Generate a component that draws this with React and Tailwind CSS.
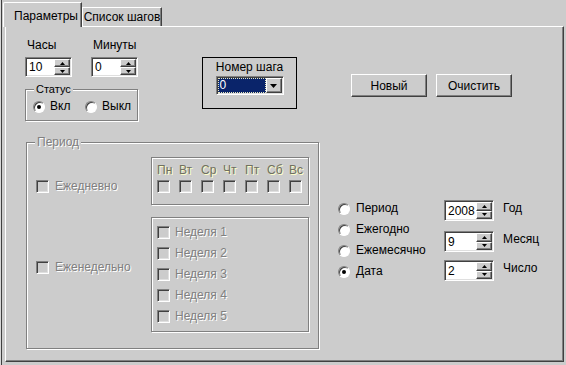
const sunken =
  'border border-t-[#808080] border-l-[#808080] border-r-white border-b-white shadow-[inset_1px_1px_0_#404040,inset_-1px_-1px_0_#dfdfdf]';
const raised =
  'border border-t-white border-l-white border-r-[#404040] border-b-[#404040] shadow-[inset_-1px_-1px_0_#808080]';
const etched = 'border border-[#808080] shadow-[inset_1px_1px_0_#ffffff,1px_1px_0_#ffffff]';
const disabledText = 'text-[#808080] [text-shadow:1px_1px_0_#ffffff]';

function Arrow({ up }) {
  return (
    <svg width="5" height="3" viewBox="0 0 5 3">
      <polygon points={up ? '2.5,0 5,3 0,3' : '0,0 5,0 2.5,3'} fill="#000" />
    </svg>
  );
}

function Spinner({ value, className }) {
  return (
    <div className={`flex p-[1px] bg-white ${sunken} ${className}`}>
      <div className="flex-1 flex items-center pl-[2px] text-[12px]">{value}</div>
      <div className="flex flex-col w-[16px]">
        <div className={`flex-1 flex items-center justify-center bg-[#cccccc] ${raised}`}>
          <Arrow up />
        </div>
        <div className={`flex-1 flex items-center justify-center bg-[#cccccc] ${raised}`}>
          <Arrow />
        </div>
      </div>
    </div>
  );
}

function Radio({ checked }) {
  return (
    <span className="shrink-0 w-[12px] h-[12px] rounded-full bg-white border border-t-[#808080] border-l-[#808080] border-r-white border-b-white shadow-[inset_1px_1px_0_#404040] flex items-center justify-center">
      {checked && <span className="w-[4px] h-[4px] rounded-full bg-black" />}
    </span>
  );
}

function Check() {
  return <span className={`shrink-0 block w-[13px] h-[13px] bg-[#cccccc] ${sunken}`} />;
}

function Group({ title, className, disabled, children }) {
  return (
    <div className={`relative ${etched} ${className}`}>
      <span
        className={`absolute -top-[7px] left-[8px] px-[2px] bg-[#cccccc] leading-[13px] ${
          disabled ? disabledText : ''
        }`}
      >
        {title}
      </span>
      {children}
    </div>
  );
}

function Field({ label, value }) {
  return (
    <div className="flex flex-col w-[47px]">
      <span className="pl-[2px] h-[13px] leading-[13px] text-[12px]">{label}</span>
      <Spinner value={value} className="mt-[5px] h-[20px] w-[47px]" />
    </div>
  );
}

const days = ['Пн', 'Вт', 'Ср', 'Чт', 'Пт', 'Сб', 'Вс'];
const weeks = ['Неделя 1', 'Неделя 2', 'Неделя 3', 'Неделя 4', 'Неделя 5'];

export default function App() {
  return (
    <div className="w-[566px] h-[365px] bg-[#cccccc] flex flex-col overflow-hidden text-black text-[11px] font-['Liberation_Sans',Arial,sans-serif] shadow-[inset_1px_0_0_#d8d8d8,inset_2px_0_0_#404040]">
      <div className="h-[26px] flex items-end pl-[3px] shrink-0">
        <div className="relative z-10 -mb-px h-[25px] w-[79px] bg-[#cccccc] border-t border-l border-white border-r border-r-[#404040] shadow-[inset_-1px_0_0_#808080] rounded-tl-[2px] pl-[10px] pt-[7px] leading-[13px] text-[12px]">
          Параметры
        </div>
        <div className="h-[19px] w-[80px] border-t border-l border-white border-r border-r-[#404040] shadow-[inset_-1px_0_0_#808080] text-center pt-[3px] leading-[13px] text-[12px]">
          Список шагов
        </div>
      </div>

      <div className="ml-[5px] w-[559px] h-[336px] shrink-0 border-t border-l border-white border-r border-b border-r-[#404040] border-b-[#404040] shadow-[inset_-1px_-1px_0_#808080]">
        <div className="flex items-start mt-[12px] ml-[19px]">
          <div className="flex flex-col w-[113px]">
            <div className="flex gap-[19px]">
              <Field label="Часы" value="10" />
              <Field label="Минуты" value="0" />
            </div>
            <Group title="Статус" className="mt-[12px] h-[32px]">
              <div className="flex items-center pt-[10px] pl-[7px] text-[12px] leading-[13px]">
                <label className="flex items-center gap-[5px] w-[52px]">
                  <Radio checked />
                  Вкл
                </label>
                <label className="flex items-center gap-[5px]">
                  <Radio />
                  Выкл
                </label>
              </div>
            </Group>
          </div>

          <div className="ml-[64px] mt-[18px] w-[95px] h-[52px] border border-black flex flex-col items-center pt-[3px]">
            <span className="leading-[13px] text-[12px]">Номер шага</span>
            <div className={`mt-[2px] w-[68px] h-[19px] p-[1px] flex bg-white ${sunken}`}>
              <div className="flex-1 bg-[#0a246a] border border-dotted border-[#e8e8c0] text-white pl-[1px] leading-[13px] text-[12px]">
                0
              </div>
              <div className={`w-[16px] flex items-center justify-center bg-[#cccccc] ${raised}`}>
                <svg width="7" height="4" viewBox="0 0 7 4">
                  <polygon points="0,0 7,0 3.5,4" fill="#000" />
                </svg>
              </div>
            </div>
          </div>

          <div className="flex gap-[9px] ml-[54px] mt-[35px]">
            <button className={`w-[76px] h-[23px] bg-[#cccccc] text-[12px] ${raised}`}>Новый</button>
            <button className={`w-[76px] h-[23px] bg-[#cccccc] text-[12px] ${raised}`}>Очистить</button>
          </div>
        </div>

        <div className="flex items-start mt-[21px]">
          <Group title="Период" disabled className="ml-[20px] w-[293px] h-[207px] text-[12px]">
            <div className="flex items-start mt-[14px]">
              <div className="w-[124px] pl-[9px] pt-[23px] flex items-center gap-[6px]">
                <Check />
                <span className={`leading-[13px] ${disabledText}`}>Ежедневно</span>
              </div>
              <div className={`w-[158px] h-[48px] pl-[5px] pt-[6px] ${etched}`}>
                <div className="grid grid-cols-7 w-[154px]">
                  {days.map((d) => (
                    <span
                      key={d}
                      className="leading-[13px] text-[#707060] [text-shadow:1px_1px_0_#ffffc8]"
                    >
                      {d}
                    </span>
                  ))}
                  {days.map((d) => (
                    <span key={d + 'c'} className="mt-[3px]">
                      <Check />
                    </span>
                  ))}
                </div>
              </div>
            </div>
            <div className="flex items-start mt-[12px]">
              <div className="w-[124px] pl-[9px] pt-[44px] flex items-center gap-[6px]">
                <Check />
                <span className={`leading-[13px] ${disabledText}`}>Еженедельно</span>
              </div>
              <div className={`w-[158px] h-[115px] pl-[5px] pt-[4px] ${etched}`}>
                {weeks.map((w) => (
                  <div key={w} className="h-[21px] flex items-center gap-[5px]">
                    <Check />
                    <span className={`leading-[13px] ${disabledText}`}>{w}</span>
                  </div>
                ))}
              </div>
            </div>
          </Group>

          <div className="ml-[19px] mt-[56px] w-[106px] flex flex-col text-[12px]">
            {['Период', 'Ежегодно', 'Ежемесячно', 'Дата'].map((r) => (
              <label key={r} className="h-[21px] flex items-center gap-[6px] leading-[13px]">
                <Radio checked={r === 'Дата'} />
                {r}
              </label>
            ))}
          </div>

          <div className="mt-[58px] flex flex-col text-[12px]">
            <div className="flex items-start">
              <Spinner value="2008" className="h-[21px] w-[50px]" />
              <span className="ml-[9px] mt-[2px] leading-[13px]">Год</span>
            </div>
            <div className="flex items-start mt-[10px]">
              <Spinner value="9" className="h-[21px] w-[50px]" />
              <span className="ml-[9px] mt-[2px] leading-[13px]">Месяц</span>
            </div>
            <div className="flex items-start mt-[8px]">
              <Spinner value="2" className="h-[21px] w-[50px]" />
              <span className="ml-[9px] mt-[2px] leading-[13px]">Число</span>
            </div>
          </div>
        </div>
      </div>
    </div>
  );
}
